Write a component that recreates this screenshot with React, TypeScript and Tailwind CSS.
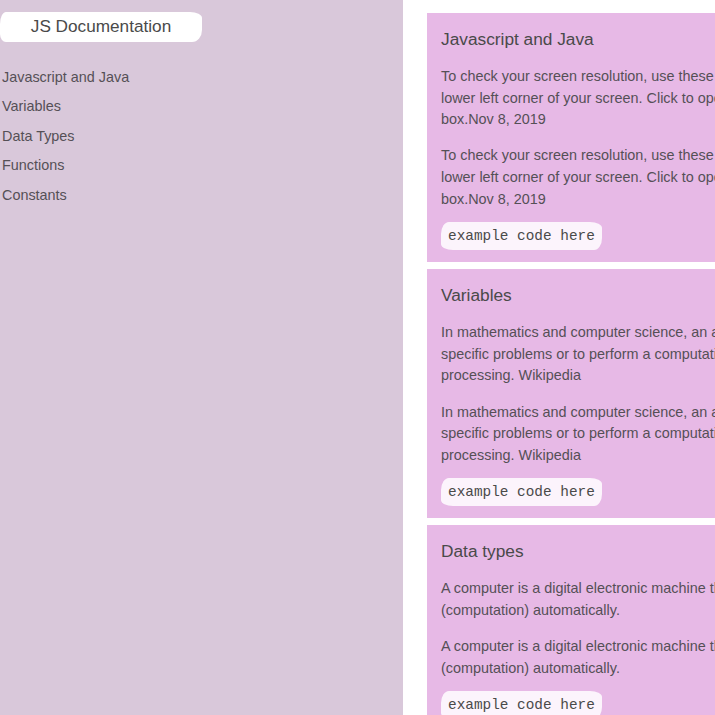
import React from "react";

const cards = [
  {
    title: "Javascript and Java",
    lines: [
      "To check your screen resolution, use these steps: click the Start button in the",
      "lower left corner of your screen. Click to open the Display Settings dialog",
      "box.Nov 8, 2019",
    ],
  },
  {
    title: "Variables",
    lines: [
      "In mathematics and computer science, an algorithm is a finite sequence of rigorous instructions to solve",
      "specific problems or to perform a computation. Algorithms are used for calculation and data",
      "processing. Wikipedia",
    ],
  },
  {
    title: "Data types",
    lines: [
      "A computer is a digital electronic machine that can be programmed to carry out sequences of operations",
      "(computation) automatically.",
    ],
  },
];

const nav = ["Javascript and Java", "Variables", "Data Types", "Functions", "Constants"];

function Para({ lines }: { lines: string[] }) {
  return (
    <p className="whitespace-nowrap text-[14.4px] leading-[21.6px] text-[#555056]">
      {lines.map((l, i) => (
        <React.Fragment key={i}>
          {l}
          {i < lines.length - 1 && <br />}
        </React.Fragment>
      ))}
    </p>
  );
}

export default function App() {
  return (
    <div
      className="flex h-[715px] w-[715px] overflow-hidden bg-white"
      style={{ fontFamily: '"Liberation Sans", Arial, sans-serif' }}
    >
      <aside className="flex w-[403px] shrink-0 flex-col bg-[#d9c8da] pt-[12px]">
        <div className="flex h-[30px] w-[202px] items-center justify-center rounded-[6px_12px_10px_6px/12px_6px_12px_8px] bg-white text-[17.2px] text-[#4a4a4a]">
          JS Documentation
        </div>
        <nav className="mt-[25px] flex flex-col gap-[7.9px] pl-[2px]">
          {nav.map((n) => (
            <a key={n} className="text-[14.4px] leading-[21.6px] text-[#555056]">
              {n}
            </a>
          ))}
        </nav>
      </aside>
      <main className="flex min-w-0 flex-1 flex-col gap-[7px] overflow-hidden pl-[24px] pt-[13px]">
        {cards.map((c) => (
          <section
            key={c.title}
            className="flex w-[700px] shrink-0 flex-col bg-[#e7b9e6] px-[14px] pb-[12px] pt-[13px]"
          >
            <h2 className="text-[17.3px] leading-[26px] text-[#4a4a4a]">{c.title}</h2>
            <div className="mt-[14px] flex flex-col gap-[14.6px]">
              <Para lines={c.lines} />
              <Para lines={c.lines} />
            </div>
            <div className="mt-[12px]">
              <code
                className="inline-block rounded-[8px_12px_8px_12px/12px_6px_12px_6px] bg-[#fcf4fc] px-[7px] text-[14.4px] leading-[28px] text-[#4a4a4a]"
                style={{ fontFamily: '"Liberation Mono", "Courier New", monospace' }}
              >
                example code here
              </code>
            </div>
          </section>
        ))}
      </main>
    </div>
  );
}
